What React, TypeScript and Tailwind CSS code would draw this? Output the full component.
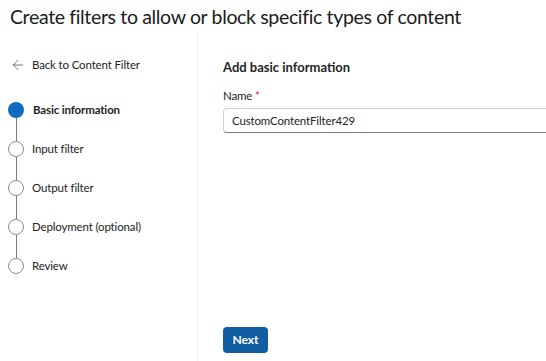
import { ArrowLeft } from "lucide-react";

const steps = [
  "Basic information",
  "Input filter",
  "Output filter",
  "Deployment (optional)",
  "Review",
];

export default function App() {
  const current = 0;

  return (
    <div
      className="w-[546px] h-[361px] overflow-hidden bg-white text-[#242424]"
      style={{ fontFamily: 'Lato, "Open Sans", sans-serif' }}
    >
      {/* Page title */}
      <h1 className="pl-[10px] pt-[3px] h-[30px] text-[19.5px] leading-[28px] tracking-[-0.35px] font-normal text-[#1b1b1b]">
        Create filters to allow or block specific types of content
      </h1>

      <div className="flex h-[331px]">
        {/* Wizard steps */}
        <div className="w-[198px] shrink-0 border-r border-[#ececec] pt-[27px]">
          <div className="flex items-center gap-[6px] pl-[10px] text-[11.5px] tracking-[-0.15px] leading-[16px]">
            <ArrowLeft size={16} strokeWidth={1.1} className="text-[#444]" />
            <span>Back to Content Filter</span>
          </div>

          <div className="mt-[29px] pl-[8px]">
            {steps.map((s, i) => (
              <div key={s}>
                <div className="flex items-center h-[16px]">
                  {i === current ? (
                    <div className="w-[16px] h-[16px] rounded-full bg-[#0f6cbd]" />
                  ) : (
                    <div className="w-[16px] h-[16px] rounded-full border border-[#8a8a8a] bg-white" />
                  )}
                  <span
                    className={
                      i === current
                        ? "ml-[9px] text-[11.5px] tracking-[-0.15px] font-bold"
                        : "ml-[8px] text-[11.5px] tracking-[-0.15px]"
                    }
                  >
                    {s}
                  </span>
                </div>
                {i < steps.length - 1 && (
                  <div className="ml-[7.5px] w-[1px] h-[23px] bg-[#7a7a7a]" />
                )}
              </div>
            ))}
          </div>
        </div>

        {/* Form */}
        <div className="flex-1 flex flex-col pl-[25px] pt-[28px]">
          <h2 className="text-[13px] leading-[18px] font-bold">Add basic information</h2>
          <label className="mt-[12px] text-[11.5px] tracking-[-0.15px] leading-[16px]">
            Name <span className="text-[#c4314b]">*</span>
          </label>
          <div className="mt-[4px] h-[25px] flex items-center pl-[8px] border border-[#d1d1d1] border-b-[#7a7a7a] rounded-l-[4px] border-r-0 text-[11.5px] tracking-[-0.15px]">
            CustomContentFilter429
          </div>

          <div className="mt-auto mb-[8px]">
            <button className="w-[45px] h-[26px] rounded-[4px] bg-[#115ea3] text-white text-[12px] font-bold">
              Next
            </button>
          </div>
        </div>
      </div>
    </div>
  );
}
